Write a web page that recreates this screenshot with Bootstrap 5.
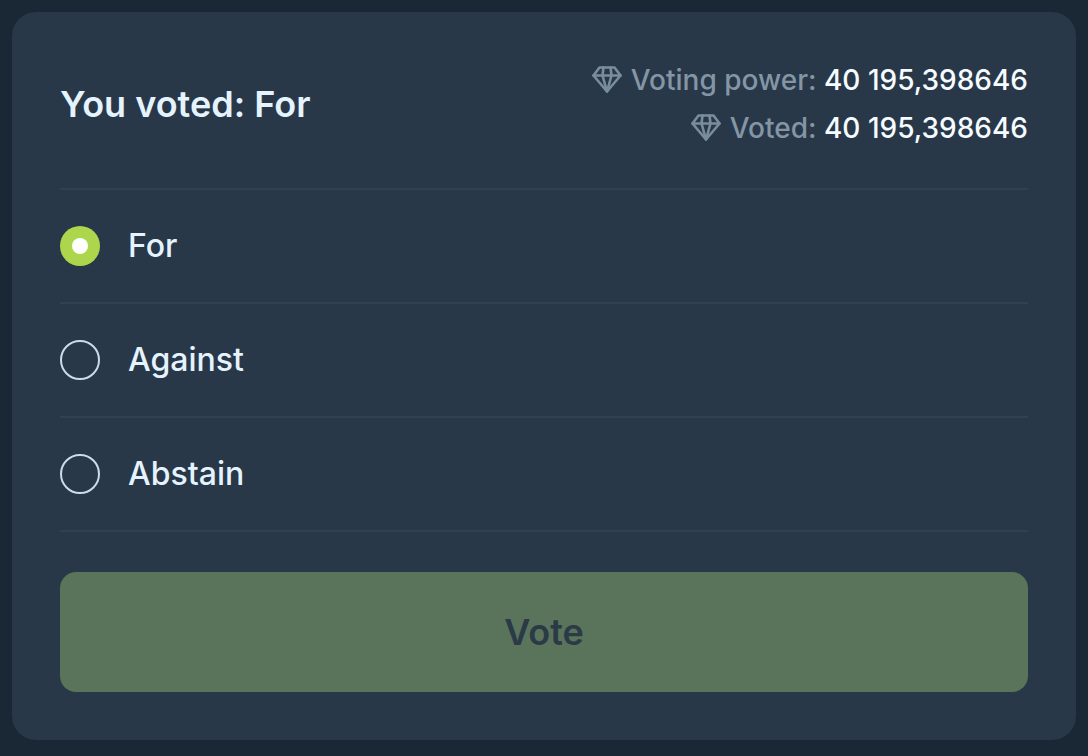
<!DOCTYPE html>
<html lang="en">
<head>
<meta charset="utf-8">
<title>Vote</title>
<link href="https://cdn.jsdelivr.net/npm/bootstrap@5.3.0/dist/css/bootstrap.min.css" rel="stylesheet">
<style>
html,body{height:100%}
body{background:#1a2735;font-family:Inter,"Liberation Sans",sans-serif;padding:12px;overflow:hidden}
.vote-panel{background:#283849;border-radius:24px;height:728px;padding:44px 48px 48px}
.vote-head{height:134px;border-bottom:2px solid #314150;padding-bottom:36px}
.vote-title{font-size:36px;font-weight:600;color:#e4f3fe;line-height:40px;margin:0}
.power-line{font-size:28px;line-height:48px;font-weight:500;color:#8496a5;white-space:nowrap}
.power-line b{font-weight:500;color:#f5fbff}
.power-line svg{width:30px;height:30px;margin-right:9px;vertical-align:-4px}
.vote-row{height:114px;border-bottom:2px solid #314150;gap:28px;font-size:32px;font-weight:500;color:#e4f3fe}
.vote-radio{width:40px;height:40px;border-radius:50%;border:2px solid #cbdbe7;flex:none}
.vote-radio.is-on{background:#aed64c;border:0}
.vote-radio.is-on::after{content:"";width:16px;height:16px;background:#fff;border-radius:50%}
.vote-submit{height:120px;margin-top:40px;background:#5a735b;color:#283849;border:0;border-radius:16px;font-size:36px;font-weight:600;width:100%}
.vote-submit:disabled{background:#5a735b;color:#2a3a46;opacity:1}
</style>
</head>
<body>
<main class="vote-panel">
  <div class="vote-head d-flex justify-content-between align-items-center">
    <h1 class="vote-title">You voted: For</h1>
    <div class="text-end">
      <div class="power-line"><svg viewBox="0 0 30 30" fill="none" stroke="#7a8d9d" stroke-width="2.600" stroke-linejoin="round" stroke-linecap="round"><path d="M7.500 3.500H22.500L28.500 11.500 15 27.500 1.500 11.500Z"/><path d="M1.500 11.500H28.500M11.500 3.500 10.500 11.500 15 27.500 19.500 11.500 18.500 3.500"/></svg>Voting power: <b>40 195,398646</b></div>
      <div class="power-line"><svg viewBox="0 0 30 30" fill="none" stroke="#7a8d9d" stroke-width="2.600" stroke-linejoin="round" stroke-linecap="round"><path d="M7.500 3.500H22.500L28.500 11.500 15 27.500 1.500 11.500Z"/><path d="M1.500 11.500H28.500M11.500 3.500 10.500 11.500 15 27.500 19.500 11.500 18.500 3.500"/></svg>Voted: <b>40 195,398646</b></div>
    </div>
  </div>
  <div class="vote-row d-flex align-items-center"><span class="vote-radio is-on d-flex align-items-center justify-content-center"></span>For</div>
  <div class="vote-row d-flex align-items-center"><span class="vote-radio"></span>Against</div>
  <div class="vote-row d-flex align-items-center"><span class="vote-radio"></span>Abstain</div>
  <button class="btn vote-submit" disabled>Vote</button>
</main>
<script src="https://cdn.jsdelivr.net/npm/bootstrap@5.3.0/dist/js/bootstrap.bundle.min.js"></script>
</body>
</html>
